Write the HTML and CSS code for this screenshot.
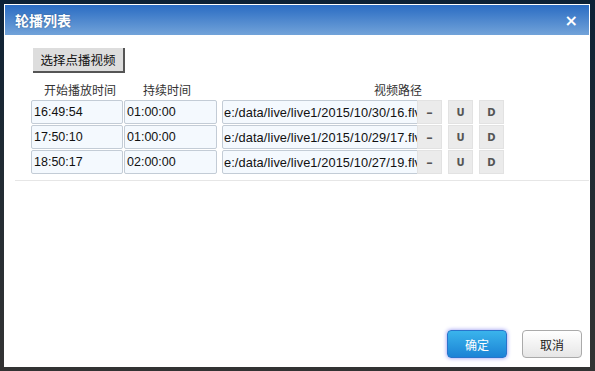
FILE: index.html
```html
<!DOCTYPE html>
<html lang="zh-CN">
<head>
    <meta charset="UTF-8">
    <title>轮播列表</title>
    <link rel="stylesheet" href="styles.css">
</head>
<body>
    <div class="backdrop">
        <div class="dialog">
            <div class="dialog-header">
                <span class="dialog-title">轮播列表</span>
                <span class="dialog-close">&times;</span>
            </div>
            <div class="dialog-body">
                <button class="pick-button">选择点播视频</button>
                <div class="playlist">
                    <div class="playlist-head">
                        <span class="label-start">开始播放时间</span>
                        <span class="label-length">持续时间</span>
                        <span class="label-path">视频路径</span>
                    </div>
                    <div class="playlist-row">
                        <input type="text" class="field" value="16:49:54">
                        <input type="text" class="field" value="01:00:00">
                        <input type="text" class="field path" value="e:/data/live/live1/2015/10/30/16.flv">
                        <button class="row-btn">&ndash;</button>
                        <button class="row-btn">U</button>
                        <button class="row-btn">D</button>
                    </div>
                    <div class="playlist-row">
                        <input type="text" class="field" value="17:50:10">
                        <input type="text" class="field" value="01:00:00">
                        <input type="text" class="field path" value="e:/data/live/live1/2015/10/29/17.flv">
                        <button class="row-btn">&ndash;</button>
                        <button class="row-btn">U</button>
                        <button class="row-btn">D</button>
                    </div>
                    <div class="playlist-row">
                        <input type="text" class="field" value="18:50:17">
                        <input type="text" class="field" value="02:00:00">
                        <input type="text" class="field path" value="e:/data/live/live1/2015/10/27/19.flv">
                        <button class="row-btn">&ndash;</button>
                        <button class="row-btn">U</button>
                        <button class="row-btn">D</button>
                    </div>
                </div>
                <div class="divider"></div>
            </div>
            <div class="dialog-footer">
                <button class="btn btn-primary">确定</button>
                <button class="btn btn-default">取消</button>
            </div>
        </div>
    </div>
</body>
</html>
```

FILE: styles.css
```css
body {
    margin: 0;
    font-family: "Liberation Sans", "Noto Sans CJK SC", sans-serif;
    font-size: 12px;
}

.backdrop {
    width: 595px;
    height: 371px;
    box-sizing: border-box;
    padding: 4px 0 0 4px;
    background: linear-gradient(to bottom, #0c2136 0%, #1f2a33 40%, #333333 100%);
}

.dialog {
    width: 586px;
    height: 363px;
    box-sizing: border-box;
    background: white;
    padding: 1px 1px 0 1px;
    display: flex;
    flex-direction: column;
}

.dialog-header {
    height: 30px;
    background: linear-gradient(to bottom, #2a6cc3, #72a3d9);
    display: flex;
    align-items: center;
    justify-content: space-between;
    padding: 0 10px;
}

.dialog-title {
    color: white;
    font-size: 14px;
    font-weight: bold;
    text-shadow: 0 0 2px rgba(0, 0, 0, 0.3);
}

.dialog-close {
    color: white;
    font-size: 16px;
    font-weight: bold;
    font-family: "DejaVu Sans", sans-serif;
    margin-right: 1px;
}

.dialog-body {
    padding: 13px 0 0 0;
}

.pick-button {
    margin-left: 28px;
    width: 92px;
    height: 25px;
    padding: 0;
    background: #dddddd;
    border: none;
    border-right: 2px solid #555;
    border-bottom: 2px solid #555;
    font-family: "Noto Sans CJK SC", sans-serif;
    font-size: 12.5px;
    color: #111;
}

.playlist {
    margin: 8px 0 0 26px;
    display: flex;
    flex-direction: column;
    gap: 1px;
}

.playlist-head,
.playlist-row {
    display: grid;
    grid-template-columns: 92px 93px 198px 25px 25px 25px;
    column-gap: 1px;
}

.playlist-head {
    height: 17px;
    margin-bottom: 1px;
    font-family: "Noto Sans CJK SC", sans-serif;
    color: #333;
    line-height: 17px;
}

.playlist-row .path {
    margin-left: 4px;
}

.playlist-row .row-btn:nth-of-type(2) {
    margin-left: 5px;
}

.playlist-row .row-btn:nth-of-type(3) {
    margin-left: 10px;
}

.label-start {
    padding-left: 13px;
    white-space: nowrap;
}

.label-length {
    padding-left: 19px;
    white-space: nowrap;
}

.label-path {
    padding-left: 156px;
    white-space: nowrap;
}

.field {
    height: 24px;
    box-sizing: border-box;
    border: 1px solid #c3ccd6;
    border-radius: 2px;
    background: #f4f9fe;
    padding: 0 2px;
    font-family: "Liberation Sans", sans-serif;
    font-size: 12.5px;
    color: #111;
    outline: none;
}

.field.path {
    width: 198px;
    padding: 0 0 0 1px;
    font-size: 12.8px;
    letter-spacing: 0.1px;
}

.row-btn {
    height: 24px;
    width: 25px;
    padding: 0;
    border: 1px solid #e2e2e2;
    background: #ebebeb;
    font-family: "DejaVu Sans", sans-serif;
    font-size: 10px;
    font-weight: bold;
    color: #555;
}

.row-btn:first-of-type {
    font-size: 13px;
}

.divider {
    margin: 6px 0 0 10px;
    height: 1px;
    background: #e6e6e6;
}

.dialog-footer {
    margin-top: auto;
    display: flex;
    justify-content: flex-end;
    gap: 15px;
    padding: 0 7px 9px 0;
}

.btn {
    width: 60px;
    height: 28px;
    border-radius: 4px;
    font-family: "Noto Sans CJK SC", sans-serif;
    font-size: 12px;
    padding: 0;
}

.btn-primary {
    color: white;
    background: linear-gradient(to bottom, #3ab4ec, #1c83d5);
    border: 1px solid #2a74cc;
    box-shadow: 0 0 4px #8f8ff0;
}

.btn-default {
    color: #222;
    background: linear-gradient(to bottom, #ffffff, #e6e6e6);
    border: 1px solid #aaaaaa;
}
```
